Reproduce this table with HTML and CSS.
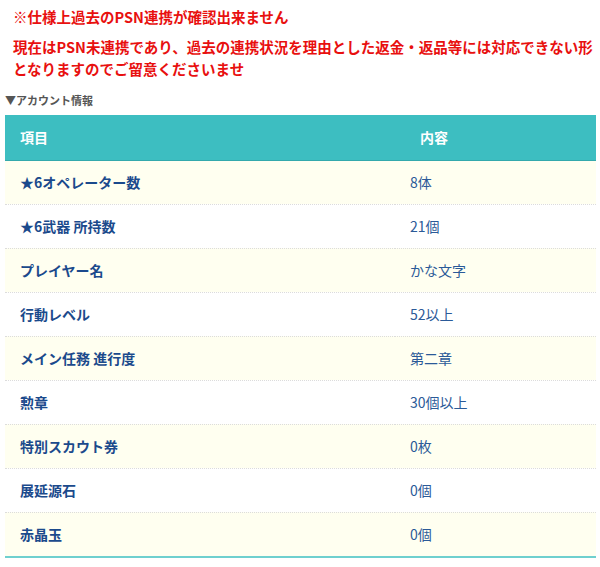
FILE: index.html
```html
<!DOCTYPE html>
<html lang="ja">
<head>
<meta charset="utf-8">
<link rel="stylesheet" href="styles.css">
</head>
<body>
<div class="page">
  <p class="warn warn-title">※仕様上過去のPSN連携が確認出来ません</p>
  <p class="warn warn-body">現在はPSN未連携であり、過去の連携状況を理由とした返金・返品等には対応できない形となりますのでご留意くださいませ</p>
  <div class="label">▼アカウント情報</div>
  <table class="info">
    <thead>
      <tr><th class="c1">項目</th><th class="c2">内容</th></tr>
    </thead>
    <tbody>
      <tr><td class="c1">★6オペレーター数</td><td class="c2">8体</td></tr>
      <tr><td class="c1">★6武器 所持数</td><td class="c2">21個</td></tr>
      <tr><td class="c1">プレイヤー名</td><td class="c2">かな文字</td></tr>
      <tr><td class="c1">行動レベル</td><td class="c2">52以上</td></tr>
      <tr><td class="c1">メイン任務 進行度</td><td class="c2">第二章</td></tr>
      <tr><td class="c1">勲章</td><td class="c2">30個以上</td></tr>
      <tr><td class="c1">特別スカウト券</td><td class="c2">0枚</td></tr>
      <tr><td class="c1">展延源石</td><td class="c2">0個</td></tr>
      <tr><td class="c1">赤晶玉</td><td class="c2">0個</td></tr>
    </tbody>
  </table>
</div>
</body>
</html>
```

FILE: styles.css
```css
html, body {
  margin: 0;
  padding: 0;
  background: #ffffff;
}
body {
  font-family: "Noto Sans CJK JP", "Noto Sans", sans-serif;
}
.page {
  padding: 6px 4px 0 5px;
}
.warn {
  margin: 0;
  padding-left: 8px;
  color: #e8100f;
  font-weight: bold;
  font-size: 14.5px;
  line-height: 22px;
}
.warn-title {
  margin-bottom: 8px;
}
.label {
  margin-top: 13px;
  font-size: 11px;
  line-height: 14px;
  font-weight: bold;
  color: #555555;
}
.info {
  margin-top: 8px;
  width: 591px;
  border-collapse: collapse;
  font-size: 14px;
}
.info th {
  background: #3dbec1;
  color: #ffffff;
  font-weight: bold;
  text-align: left;
  height: 45px;
  padding: 0 15px;
  border-bottom: 1px solid #34a9ac;
  box-sizing: border-box;
}
.info th.c2 {
  padding-left: 25px;
}
.info th.c1, .info td.c1 {
  width: 360px;
}
.info td {
  height: 43px;
  padding: 0 15px;
  border-bottom: 1px dotted #dcdcdc;
}
.info tbody tr:nth-child(odd) td {
  background: #fffff0;
}
.info td.c1 {
  color: #1b4a8c;
  font-weight: bold;
}
.info td.c2 {
  color: #2b5a98;
}
.info tbody tr:last-child td {
  border-bottom: 2px solid #6fd0cf;
}
```
